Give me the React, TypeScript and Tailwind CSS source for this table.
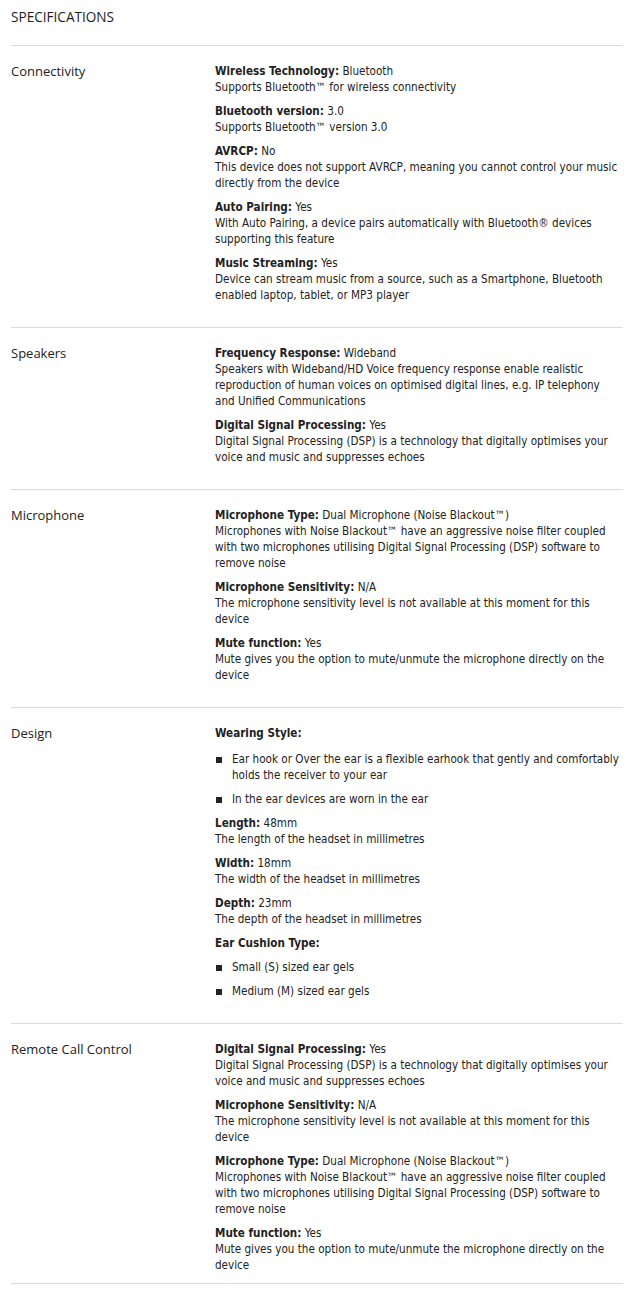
import React from "react";

type Item =
  | { kind: "spec"; label: string; value?: string; desc?: string }
  | { kind: "list"; label: string; bullets: string[]; spaced?: boolean };

interface Section {
  title: string;
  items: Item[];
}

const sections: Section[] = [
  {
    title: "Connectivity",
    items: [
      { kind: "spec", label: "Wireless Technology", value: "Bluetooth", desc: "Supports Bluetooth™ for wireless connectivity" },
      { kind: "spec", label: "Bluetooth version", value: "3.0", desc: "Supports Bluetooth™ version 3.0" },
      { kind: "spec", label: "AVRCP", value: "No", desc: "This device does not support AVRCP, meaning you cannot control your music directly from the device" },
      { kind: "spec", label: "Auto Pairing", value: "Yes", desc: "With Auto Pairing, a device pairs automatically with Bluetooth® devices supporting this feature" },
      { kind: "spec", label: "Music Streaming", value: "Yes", desc: "Device can stream music from a source, such as a Smartphone, Bluetooth enabled laptop, tablet, or MP3 player" },
    ],
  },
  {
    title: "Speakers",
    items: [
      { kind: "spec", label: "Frequency Response", value: "Wideband", desc: "Speakers with Wideband/HD Voice frequency response enable realistic reproduction of human voices on optimised digital lines, e.g. IP telephony and Unified Communications" },
      { kind: "spec", label: "Digital Signal Processing", value: "Yes", desc: "Digital Signal Processing (DSP) is a technology that digitally optimises your voice and music and suppresses echoes" },
    ],
  },
  {
    title: "Microphone",
    items: [
      { kind: "spec", label: "Microphone Type", value: "Dual Microphone (Noise Blackout™)", desc: "Microphones with Noise Blackout™ have an aggressive noise filter coupled with two microphones utilising Digital Signal Processing (DSP) software to remove noise" },
      { kind: "spec", label: "Microphone Sensitivity", value: "N/A", desc: "The microphone sensitivity level is not available at this moment for this device" },
      { kind: "spec", label: "Mute function", value: "Yes", desc: "Mute gives you the option to mute/unmute the microphone directly on the device" },
    ],
  },
  {
    title: "Design",
    items: [
      { kind: "list", label: "Wearing Style", spaced: true, bullets: ["Ear hook or Over the ear is a flexible earhook that gently and comfortably holds the receiver to your ear", "In the ear devices are worn in the ear"] },
      { kind: "spec", label: "Length", value: "48mm", desc: "The length of the headset in millimetres" },
      { kind: "spec", label: "Width", value: "18mm", desc: "The width of the headset in millimetres" },
      { kind: "spec", label: "Depth", value: "23mm", desc: "The depth of the headset in millimetres" },
      { kind: "list", label: "Ear Cushion Type", bullets: ["Small (S) sized ear gels", "Medium (M) sized ear gels"] },
    ],
  },
  {
    title: "Remote Call Control",
    items: [
      { kind: "spec", label: "Digital Signal Processing", value: "Yes", desc: "Digital Signal Processing (DSP) is a technology that digitally optimises your voice and music and suppresses echoes" },
      { kind: "spec", label: "Microphone Sensitivity", value: "N/A", desc: "The microphone sensitivity level is not available at this moment for this device" },
      { kind: "spec", label: "Microphone Type", value: "Dual Microphone (Noise Blackout™)", desc: "Microphones with Noise Blackout™ have an aggressive noise filter coupled with two microphones utilising Digital Signal Processing (DSP) software to remove noise" },
      { kind: "spec", label: "Mute function", value: "Yes", desc: "Mute gives you the option to mute/unmute the microphone directly on the device" },
    ],
  },
];

function SpecItem({ item }: { item: Item }) {
  if (item.kind === "list") {
    return (
      <div className="flex flex-col gap-2">
        <p className={`font-bold ${item.spaced ? "mb-[2px]" : ""}`}>{item.label}:</p>
        {item.bullets.map((b, i) => (
          <div key={i} className="flex items-start">
            <span className="mt-[6px] ml-[1px] w-[6px] h-[6px] bg-[#222] shrink-0" />
            <span className="pl-[10px]">{b}</span>
          </div>
        ))}
      </div>
    );
  }
  return (
    <div>
      <p>
        <span className="font-bold">{item.label}:</span> {item.value}
      </p>
      {item.desc && <p>{item.desc}</p>}
    </div>
  );
}

export default function App() {
  return (
    <div className="bg-white min-h-[1295px] pl-[11px] pr-[8px] text-[#222]">
      {/* Header */}
      <h2 className="pt-[7px] pb-[18px] text-[13.6px] leading-[20px] font-['Open_Sans',sans-serif] text-[#1c1c24]">
        SPECIFICATIONS
      </h2>

      {sections.map((s, i) => (
        <div
          key={s.title}
          className={`flex border-t border-[#dadada] pt-[16px] ${i === sections.length - 1 ? "pb-[10px] border-b" : "pb-[24px]"}`}
        >
          <div className="w-[204px] shrink-0 pt-[1px] text-[13px] leading-[16px] font-['Open_Sans',sans-serif] text-[#222]">
            {s.title}
          </div>
          <div className="flex-1 pt-[1px] pr-[3px] flex flex-col gap-2 text-[11.6px] leading-[16px] font-['DejaVu_Sans_Condensed','DejaVu_Sans',sans-serif]">
            {s.items.map((it, j) => (
              <SpecItem key={j} item={it} />
            ))}
          </div>
        </div>
      ))}
    </div>
  );
}
